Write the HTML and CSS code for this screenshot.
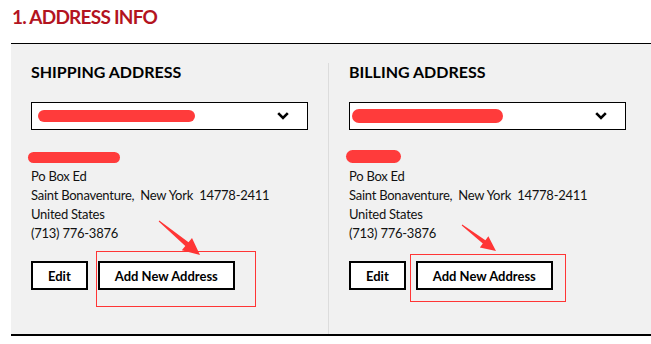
FILE: index.html
```html
<!DOCTYPE html>
<html lang="en">
<head>
    <meta charset="UTF-8">
    <meta name="viewport" content="width=device-width, initial-scale=1.0">
    <link rel="stylesheet" href="styles.css">
    <title>Address Info</title>
</head>
<body>

    <h2 class="step-title">1. ADDRESS INFO</h2>

    <div class="address-panel">
        <div class="address-col">
            <h3>SHIPPING ADDRESS</h3>
            <div class="address-select">
                <span class="redact select-redact"></span>
                <svg class="chevron" width="12" height="8" viewBox="0 0 12 8"><polyline points="1.2,1.2 6,6 10.8,1.2" fill="none" stroke="#000" stroke-width="2.6"/></svg>
            </div>
            <div class="address-lines">
                <div><span class="redact name-redact"></span></div>
                <div>Po Box Ed</div>
                <div>Saint Bonaventure,&nbsp; New York&nbsp; 14778-2411</div>
                <div>United States</div>
                <div>(713) 776-3876</div>
            </div>
            <div class="address-actions">
                <button class="btn">Edit</button>
                <button class="btn">Add New Address</button>
                <!-- annotation -->
                <span class="mark-box left-box"></span>
                <svg class="mark-arrow left-arrow" width="52" height="42" viewBox="0 0 52 42"><polygon points="7.7,5.4 34.3,30.1 30.8,34.3 49,39 41,22 37.5,26.3 8.3,4.6" fill="#ff3535"/></svg>
            </div>
        </div>

        <div class="address-col billing">
            <h3>BILLING ADDRESS</h3>
            <div class="address-select">
                <span class="redact select-redact"></span>
                <svg class="chevron" width="12" height="8" viewBox="0 0 12 8"><polyline points="1.2,1.2 6,6 10.8,1.2" fill="none" stroke="#000" stroke-width="2.6"/></svg>
            </div>
            <div class="address-lines">
                <div><span class="redact name-redact"></span></div>
                <div>Po Box Ed</div>
                <div>Saint Bonaventure,&nbsp; New York&nbsp; 14778-2411</div>
                <div>United States</div>
                <div>(713) 776-3876</div>
            </div>
            <div class="address-actions">
                <button class="btn">Edit</button>
                <button class="btn">Add New Address</button>
                <span class="mark-box right-box"></span>
                <svg class="mark-arrow right-arrow" width="44" height="34" viewBox="0 0 44 34"><polygon points="6.7,5.4 27.8,23.6 24.85,27.5 41,31 33.35,16.3 30.4,20.2 7.3,4.6" fill="#ff3535"/></svg>
            </div>
        </div>
    </div>

</body>
</html>
```

FILE: styles.css
```css
body {
    margin: 0;
    padding: 5px 0 0 12px;
    font-family: 'Lato', 'Liberation Sans', sans-serif;
    color: #111;
    background: #fff;
}
.step-title {
    margin: 0 0 14px 0;
    font-size: 19px;
    line-height: 24px;
    font-weight: 700;
    letter-spacing: -0.75px;
    color: #b3141f;
}
.address-panel {
    margin-left: -1px;
    border-top: 1px solid #000;
    border-bottom: 2px solid #000;
    background-color: #f1f1f1;
    height: 293px;
    box-sizing: border-box;
    display: grid;
    grid-template-columns: 317px 1fr;
    padding-top: 19px;
}
.address-col {
    padding-left: 20px;
}
.address-col.billing {
    border-left: 1px solid #dcdcdc;
}
.address-col h3 {
    margin: 0 0 21px 0;
    font-size: 16px;
    line-height: 18px;
    font-weight: 700;
    color: #000;
}
.address-select {
    width: 277px;
    height: 28px;
    box-sizing: border-box;
    border: 1px solid #000;
    background: #fff;
    display: flex;
    align-items: center;
    justify-content: space-between;
    padding: 0 18px 0 6px;
}
.billing .address-select {
    padding-left: 2px;
}
.redact {
    display: inline-block;
    background-color: #ff3b3b;
    border-radius: 7px;
}
.select-redact {
    width: 157px;
    height: 12px;
}
.billing .select-redact {
    width: 151px;
    height: 14px;
}
.address-lines {
    margin-top: 18px;
    font-size: 13px;
    line-height: 19px;
    letter-spacing: -0.25px;
    color: #111;
}
.name-redact {
    width: 92px;
    height: 11px;
    margin-left: -3px;
    vertical-align: -1px;
}
.billing .name-redact {
    width: 55px;
    height: 13px;
}
.address-actions {
    position: relative;
    margin-top: 18px;
    display: flex;
    gap: 10px;
}
.btn {
    height: 29px;
    padding: 0 15px;
    border: 2px solid #000;
    background: #fff;
    font-family: 'Lato', 'Liberation Sans', sans-serif;
    font-size: 13px;
    font-weight: 700;
    color: #000;
}
.mark-box {
    position: absolute;
    border: 1px solid #ff3535;
}
.left-box {
    left: 65px;
    top: -10px;
    width: 158px;
    height: 54px;
}
.right-box {
    left: 61px;
    top: -7px;
    width: 154px;
    height: 46px;
}
.mark-arrow {
    position: absolute;
}
.left-arrow {
    left: 120px;
    top: -45px;
}
.right-arrow {
    left: 106px;
    top: -41px;
}
```
